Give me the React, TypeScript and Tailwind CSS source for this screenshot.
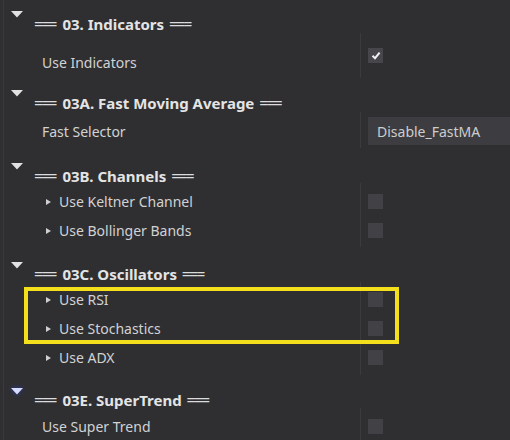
import React from 'react';

const font = { fontFamily: '"Noto Sans", "Open Sans", sans-serif' };

const Caret = ({ blue = false }: { blue?: boolean }) => (
    <svg width="12" height="7" viewBox="0 0 12 7" className={blue ? 'drop-shadow-[0_0_2px_#2a3aa0]' : ''}>
        <polygon points="0,0 12,0 6,6.5" fill={blue ? '#d6dcff' : '#e2e2e2'} />
    </svg>
);

const Eq = ({ className = '' }: { className?: string }) => (
    <span className={`font-normal text-[16px] tracking-[-2px] text-[#dcdcdc] ${className}`}>===</span>
);

const Header = ({ title, h, triTop, textTop, blue }: { title: string; h: number; triTop: number; textTop: number; blue?: boolean }) => (
    <div className="flex items-start shrink-0" style={{ height: h }}>
        <div className="ml-[7px] w-[23px]" style={{ paddingTop: triTop }}>
            <Caret blue={blue} />
        </div>
        <div className="text-[15px] leading-[20px] font-bold text-[#e4e4e4] whitespace-nowrap" style={{ paddingTop: textTop }}>
            <Eq className="mr-[3px]" /> {title} <Eq className="ml-[1px]" />
        </div>
    </div>
);

const Check = ({ checked = false }: { checked?: boolean }) => (
    <div className={`w-[15px] h-[15px] flex items-center justify-center ${checked ? 'bg-[#46464b]' : 'bg-[#414146]'}`}>
        {checked && (
            <svg width="10" height="9" viewBox="0 0 10 9">
                <path d="M1.5 4.8 L4 7.2 L8.6 1.6" stroke="#f0f0f0" strokeWidth="2" fill="none" />
            </svg>
        )}
    </div>
);

const Row = ({ label, sub, children }: { label: string; sub?: boolean; children?: React.ReactNode }) => (
    <div className="flex h-[29px] items-center">
        <div className="w-[357px] flex items-center text-[14px] text-[#d2d2d2] whitespace-nowrap">
            {sub ? (
                <>
                    <svg width="5" height="6" viewBox="0 0 5 6" className="ml-[42px] mr-[8px]">
                        <polygon points="0,0 5,3 0,6" fill="#cfcfcf" />
                    </svg>
                    {label}
                </>
            ) : (
                <span className="ml-[38px]">{label}</span>
            )}
        </div>
        <div className="pl-[7px]">{children}</div>
    </div>
);

const Group = ({ h, pt, children }: { h: number; pt: number; children: React.ReactNode }) => (
    <div className="relative shrink-0" style={{ height: h, paddingTop: pt }}>
        <div className="absolute left-[356px] top-0 bottom-0 w-px bg-[#3b3b3e]" />
        {children}
    </div>
);

export default function App() {
    return (
        <div className="w-[510px] h-[440px] overflow-hidden bg-[#2f2f32] flex relative" style={font}>
            <div className="w-[3px] shrink-0" />
            <div className="w-px bg-[#3a3a3d] shrink-0" />
            <div className="flex-1 flex flex-col">
                <Header title="03. Indicators" h={33} triTop={11} textTop={14} />
                <Group h={45} pt={0}>
                    <div className="flex h-[45px]">
                        <div className="w-[357px] text-[14px] leading-[20px] text-[#d2d2d2] pl-[38px] pt-[20px]">Use Indicators</div>
                        <div className="pl-[7px] pt-[15px]"><Check checked /></div>
                    </div>
                </Group>

                <Header title="03A. Fast Moving Average" h={34} triTop={12} textTop={15} />
                <Group h={36} pt={5}>
                    <div className="flex h-[28px] items-center">
                        <div className="w-[357px] text-[14px] text-[#d2d2d2] pl-[38px]">Fast Selector</div>
                        <div className="ml-[7px] flex-1 h-[28px] bg-[#3d3d41] flex items-center pl-[9px] text-[14px] text-[#cdcdcd]">Disable_FastMA</div>
                    </div>
                </Group>

                <Header title="03B. Channels" h={35} triTop={15} textTop={18} />
                <Group h={64} pt={4}>
                    <Row label="Use Keltner Channel" sub><Check /></Row>
                    <Row label="Use Bollinger Bands" sub><Check /></Row>
                </Group>

                <Header title="03C. Oscillators" h={35} triTop={15} textTop={17} />
                <Group h={93} pt={3}>
                    <Row label="Use RSI" sub><Check /></Row>
                    <Row label="Use Stochastics" sub><Check /></Row>
                    <Row label="Use ADX" sub><Check /></Row>
                </Group>

                <Header title="03E. SuperTrend" h={33} triTop={13} textTop={15} blue />
                <Group h={40} pt={4}>
                    <Row label="Use Super Trend"><Check /></Row>
                </Group>
            </div>

            <div className="absolute left-[24px] top-[287px] w-[375px] h-[57px] border-[4px] border-[#f3df1b]" />
        </div>
    );
}
